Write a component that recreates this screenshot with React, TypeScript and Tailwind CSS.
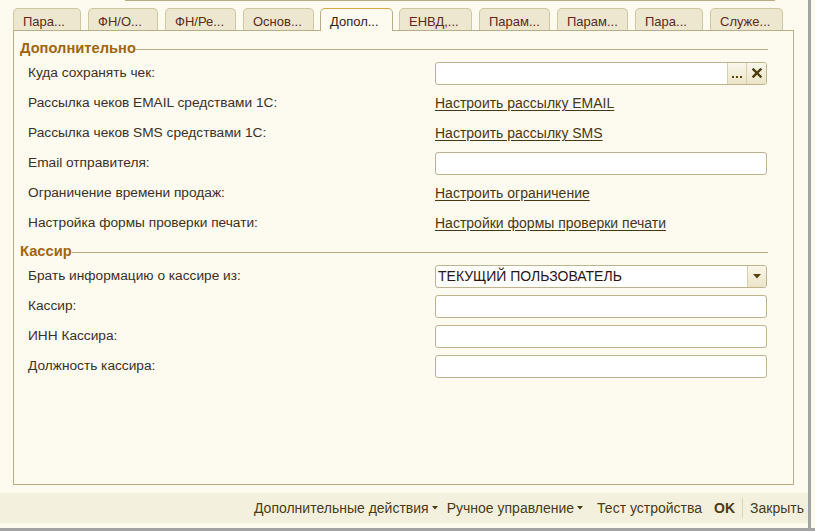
import React from "react";

const tabs = [
  { t: "Пара...", w: 68 },
  { t: "ФН/О...", w: 70 },
  { t: "ФН/Ре...", w: 71 },
  { t: "Основ...", w: 71 },
  { t: "Допол...", w: 71, active: true },
  { t: "ЕНВД,...", w: 73 },
  { t: "Парам...", w: 71 },
  { t: "Парам...", w: 71 },
  { t: "Пара...", w: 68 },
  { t: "Служе...", w: 73 },
];

function Header({ text }: { text: string }) {
  return (
    <div className="flex items-center h-[20px] pl-[6px] pr-[25px]">
      <span className="font-bold text-[14.7px] text-[#a0660e] leading-none">{text}</span>
      <div className="flex-1 h-px bg-[#b8ad86] mt-[2px]" />
    </div>
  );
}

function Row({ label, children }: { label: string; children?: React.ReactNode }) {
  return (
    <div className="flex items-center h-[30px]">
      <div className="w-[421px] pl-[14px] text-[13.7px] text-[#3a3124]">{label}</div>
      <div className="w-[332px]">{children}</div>
    </div>
  );
}

function Input({ children }: { children?: React.ReactNode }) {
  return (
    <div className="h-[23px] w-[332px] bg-white border border-[#beb38c] rounded-[3px] flex items-stretch overflow-hidden">
      {children}
    </div>
  );
}

function Link({ text }: { text: string }) {
  return <span className="text-[14px] text-[#4a3712] underline underline-offset-2">{text}</span>;
}

export default function App() {
  return (
    <div className="w-[815px] h-[531px] bg-[#fdfaf0] flex flex-col overflow-hidden font-['Arial','Liberation_Sans',sans-serif]">
      <div className="flex h-[528px]">
        <div className="w-[808px] flex flex-col">
          <div className="ml-[125px] w-[650px] h-px bg-[#b8ad86]" />
          <div className="flex pl-[13px] pt-[6px] gap-[7px] h-[29px] items-end">
            {tabs.map((tb, i) =>
              tb.active ? (
                <div
                  key={i}
                  style={{ width: tb.w + 2 }}
                  className="h-[23px] -mx-[1px] -mb-px relative z-10 bg-[#fdfaf0] border border-b-0 border-[#b8ad86] border-t-[#d6a84a] rounded-t-[5px] pl-[9px] pt-[3px] text-[13px] text-[#2e2418]"
                >
                  {tb.t}
                </div>
              ) : (
                <div
                  key={i}
                  style={{ width: tb.w }}
                  className="h-[22px] bg-[#ede7cf] border border-b-0 border-[#cfc6a2] rounded-t-[5px] pl-[9px] pt-[3px] text-[13px] text-[#5e2a1c]"
                >
                  {tb.t}
                </div>
              )
            )}
          </div>
          <div className="ml-[13px] w-[781px] h-[455px] border border-[#b8ad86] pt-[7px]">
            <Header text="Дополнительно" />
            <Row label="Куда сохранять чек:">
              <Input>
                <div className="flex-1" />
                <div className="w-[19px] bg-gradient-to-b from-[#faf7ea] to-[#ebe4c8] border-l border-[#d8cfac] flex items-end justify-center pb-[6px] gap-[2px]">
                  <span className="w-[2px] h-[2px] bg-[#5a4614]" />
                  <span className="w-[2px] h-[2px] bg-[#5a4614]" />
                  <span className="w-[2px] h-[2px] bg-[#5a4614]" />
                </div>
                <div className="w-[20px] bg-gradient-to-b from-[#faf7ea] to-[#ebe4c8] border-l border-[#d8cfac] flex items-center justify-center">
                  <svg width="10" height="10" viewBox="0 0 10 10">
                    <path d="M1.5 1.5 L8.5 8.5 M8.5 1.5 L1.5 8.5" stroke="#4a3a0e" strokeWidth="2.4" strokeLinecap="square" />
                  </svg>
                </div>
              </Input>
            </Row>
            <Row label="Рассылка чеков EMAIL средствами 1С:">
              <Link text="Настроить рассылку EMAIL" />
            </Row>
            <Row label="Рассылка чеков SMS средствами 1С:">
              <Link text="Настроить рассылку SMS" />
            </Row>
            <Row label="Email отправителя:">
              <Input />
            </Row>
            <Row label="Ограничение времени продаж:">
              <Link text="Настроить ограничение" />
            </Row>
            <Row label="Настройка формы проверки печати:">
              <Link text="Настройки формы проверки печати" />
            </Row>
            <div className="h-[3px]" />
            <Header text="Кассир" />
            <Row label="Брать информацию о кассире из:">
              <Input>
                <div className="flex-1 pl-[2px] flex items-center text-[14px] text-[#2a1410]">ТЕКУЩИЙ ПОЛЬЗОВАТЕЛЬ</div>
                <div className="w-[19px] bg-gradient-to-b from-[#faf7ea] to-[#ebe4c8] border-l border-[#d8cfac] flex items-center justify-center">
                  <svg width="8" height="5" viewBox="0 0 8 5">
                    <path d="M0 0 L8 0 L4 4.5 Z" fill="#5a4210" />
                  </svg>
                </div>
              </Input>
            </Row>
            <Row label="Кассир:">
              <Input />
            </Row>
            <Row label="ИНН Кассира:">
              <Input />
            </Row>
            <Row label="Должность кассира:">
              <Input />
            </Row>
          </div>
          <div className="mt-[8px] h-[30px] bg-[#f3f1de] flex items-center justify-end pr-[4px] text-[14px] text-[#4a3a18]">
            <span>Дополнительные действия</span>
            <svg className="ml-[3px]" width="6" height="4" viewBox="0 0 6 4"><path d="M0 0 L6 0 L3 3.5 Z" fill="#4a3a18" /></svg>
            <span className="ml-[9px]">Ручное управление</span>
            <svg className="ml-[3px]" width="6" height="4" viewBox="0 0 6 4"><path d="M0 0 L6 0 L3 3.5 Z" fill="#4a3a18" /></svg>
            <span className="ml-[14px]">Тест устройства</span>
            <span className="ml-[12px] font-bold">OK</span>
            <div className="ml-[7px] w-px h-[20px] bg-[#dcd6b8]" />
            <span className="ml-[7px]">Закрыть</span>
          </div>
          <div className="flex-1" />
        </div>
        <div className="w-[3px] bg-[#a3a3a3]" />
        <div className="flex-1" />
      </div>
      <div className="h-[3px] bg-[#a3a3a3]" />
    </div>
  );
}
